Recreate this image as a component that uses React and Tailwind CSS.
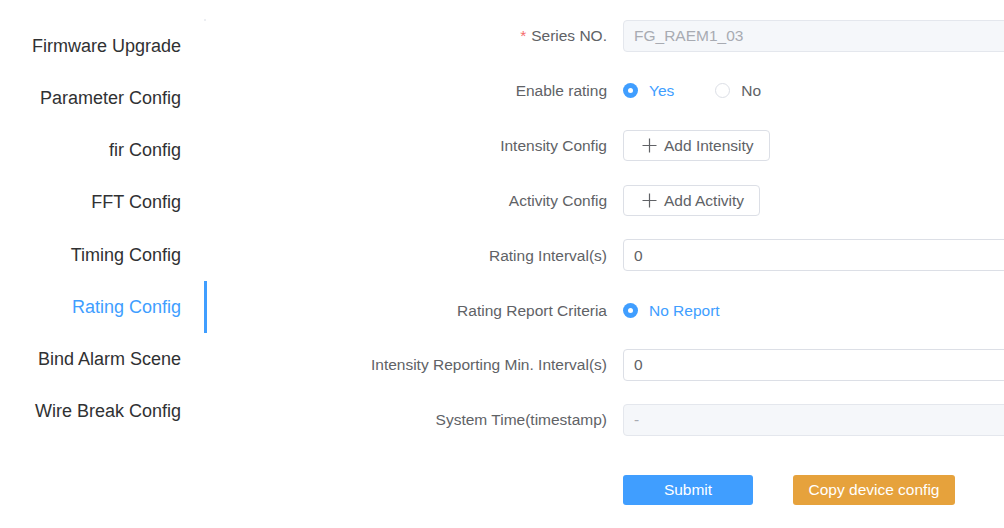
import React from 'react';

const tabs = [
  'Firmware Upgrade',
  'Parameter Config',
  'fir Config',
  'FFT Config',
  'Timing Config',
  'Rating Config',
  'Bind Alarm Scene',
  'Wire Break Config',
];

const Radio = ({ checked, label }) => (
  <label className="flex items-center mr-[41px]">
    {checked ? (
      <span className="w-[15px] h-[15px] rounded-full bg-[#409eff] flex items-center justify-center">
        <span className="w-[5px] h-[5px] rounded-full bg-white" />
      </span>
    ) : (
      <span className="w-[15px] h-[15px] rounded-full border border-[#dcdfe6] bg-white" />
    )}
    <span className={`ml-[11px] ${checked ? 'text-[#409eff]' : 'text-[#606266]'}`}>{label}</span>
  </label>
);

const PlusIcon = () => (
  <svg width="15" height="15" viewBox="0 0 15 15" className="shrink-0">
    <path d="M7.5 0.5v14M0.5 7.5h14" stroke="#606266" strokeWidth="1.2" fill="none" />
  </svg>
);

const Row = ({ label, required, children, last }) => (
  <div className={`flex items-center h-[32px] ${last ? '' : 'mb-[22.85px]'}`}>
    <div className="w-[416px] pr-[16px] text-right text-[#606266] shrink-0">
      {required && <span className="text-[#f56c6c] mr-[5px]">*</span>}
      {label}
    </div>
    <div className="flex-1 flex items-center min-w-0">{children}</div>
  </div>
);

const Input = ({ value, disabled }) => (
  <div
    className={`w-full h-[32px] rounded-[4px] border flex items-center pl-[10px] ${
      disabled ? 'bg-[#f5f7fa] border-[#e4e7ed] text-[#a8abb2]' : 'bg-white border-[#dcdfe6] text-[#606266]'
    }`}
  >
    {value}
  </div>
);

const AddButton = ({ text }) => (
  <button className="h-[31px] pl-[18px] pr-[15px] flex items-center gap-[7px] border border-[#dcdfe6] rounded-[4px] bg-white text-[#606266]">
    <PlusIcon />
    <span>{text}</span>
  </button>
);

export default function App() {
  return (
    <div
      className="w-[1004px] h-[528px] overflow-hidden bg-white flex"
      style={{ fontFamily: '"Liberation Sans", Arial, sans-serif' }}
    >
      {/* Side tabs */}
      <div className="w-[207px] shrink-0 pt-[20.5px] relative">
        <div className="absolute right-[1px] top-[19px] w-[2px] h-[2px] bg-[#eceef2]" />
        {tabs.map((t) => {
          const active = t === 'Rating Config';
          return (
            <div
              key={t}
              className={`h-[52.15px] flex items-center justify-end pr-[26px] text-[18px] relative ${
                active ? 'text-[#409eff]' : 'text-[#303133]'
              }`}
            >
              {t}
              {active && <div className="absolute right-0 top-0 w-[3px] h-[52px] bg-[#409eff]" />}
            </div>
          );
        })}
      </div>

      {/* Form */}
      <div className="flex-1 pt-[20px] text-[15.5px] min-w-0">
        <div className="w-[900px]">
          <Row label="Series NO." required>
            <Input value="FG_RAEM1_03" disabled />
          </Row>
          <Row label="Enable rating">
            <Radio checked label="Yes" />
            <Radio label="No" />
          </Row>
          <Row label="Intensity Config">
            <AddButton text="Add Intensity" />
          </Row>
          <Row label="Activity Config">
            <AddButton text="Add Activity" />
          </Row>
          <Row label="Rating Interval(s)">
            <Input value="0" />
          </Row>
          <Row label="Rating Report Criteria">
            <Radio checked label="No Report" />
          </Row>
          <Row label="Intensity Reporting Min. Interval(s)">
            <Input value="0" />
          </Row>
          <Row label="System Time(timestamp)" last>
            <Input value="-" disabled />
          </Row>
          <div className="flex mt-[39px] pl-[416px] gap-[40px]">
            <button className="w-[130px] h-[30px] rounded-[3px] bg-[#409eff] text-white">Submit</button>
            <button className="w-[162px] h-[30px] rounded-[3px] bg-[#e6a23c] text-white">Copy device config</button>
          </div>
        </div>
      </div>
    </div>
  );
}
